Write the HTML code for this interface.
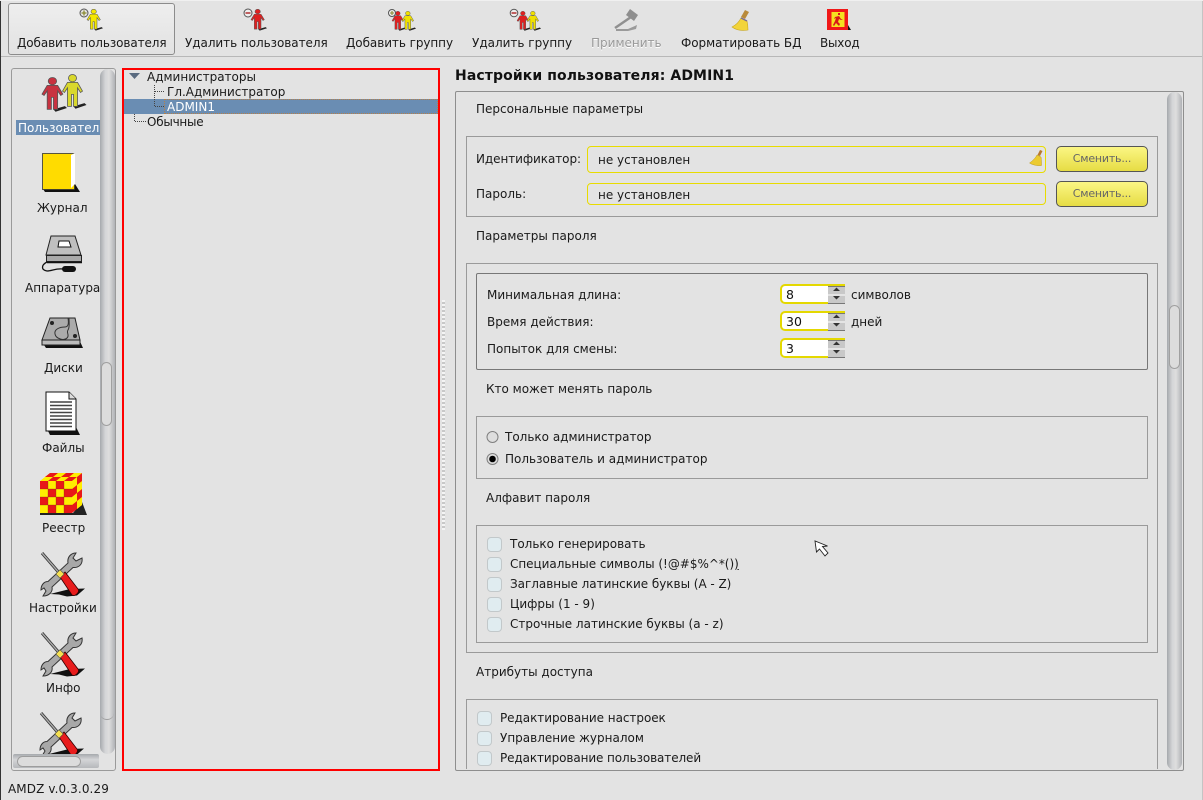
<!DOCTYPE html>
<html><head><meta charset="utf-8">
<style>
html,body{margin:0;padding:0;width:1203px;height:800px;overflow:hidden;background:#e3e3e3}
body{position:relative;font-family:"DejaVu Sans",sans-serif;font-size:12px;color:#1a1a1a}
.t{position:absolute;white-space:nowrap;line-height:14px;height:14px}
.b{position:absolute;box-sizing:border-box;border:1px solid #9a9a9a}
.f{position:absolute;box-sizing:border-box;border:1px solid #e8dc00;border-radius:4px}
.btn{position:absolute;box-sizing:border-box;width:92px;border:1px solid #555;border-radius:5px;background:linear-gradient(#fbf684,#e6dc44);color:#666;font-size:11px;text-align:center;letter-spacing:-.2px}
.cb{position:absolute;box-sizing:border-box;width:15px;height:15px;border:1px solid #c2c8ca;border-radius:4px;background:#e0ecf0}
.sb{position:absolute;background:linear-gradient(90deg,#a6a9ad,#d4d5d7 35%,#dedede 60%,#b0b2b6)}
.sp{position:absolute;left:780px;width:65px;height:20px;box-sizing:border-box;border:2px solid #e4d800;border-right:0;border-radius:5px 0 0 5px;background:#fff;line-height:17px;padding-left:4px;color:#111;font-size:12.5px}
.ar{position:absolute;left:828px;width:17px;height:16px;background:#c8c8c8;border-top:1px solid #777;border-bottom:1px solid #777}
svg{position:absolute;left:0;top:0}
</style></head><body>

<div style="position:absolute;left:0;top:0;width:1px;height:800px;background:#333"></div>
<div style="position:absolute;left:1202px;top:0;width:1px;height:800px;background:#c4c4c4"></div>
<div style="position:absolute;left:0;top:0;width:1203px;height:1px;background:#f0f0f0"></div>
<div style="position:absolute;left:1px;top:56px;width:1201px;height:1px;background:#b8b8b8"></div>

<div style="position:absolute;left:8px;top:3px;width:167px;height:52px;box-sizing:border-box;border:1px solid #8c8c8c;border-radius:3px;background:linear-gradient(#eeeeee,#e2e2e2)"></div>
<div class="t" style="left:17px;top:36px;letter-spacing:-.1px">Добавить пользователя</div>
<div class="t" style="left:185px;top:36px;letter-spacing:-.05px">Удалить пользователя</div>
<div class="t" style="left:346px;top:36px;letter-spacing:-.07px">Добавить группу</div>
<div class="t" style="left:472px;top:36px">Удалить группу</div>
<div class="t" style="left:591px;top:36px;color:#9a9a9a;text-shadow:0 1px 0 #fff">Применить</div>
<div class="t" style="left:681px;top:36px;letter-spacing:-.06px">Форматировать БД</div>
<div class="t" style="left:820px;top:36px;letter-spacing:-.2px">Выход</div>

<!-- sidebar -->
<div class="b" style="left:11px;top:68px;width:105px;height:703px;border-radius:3px"></div>
<div class="sb" style="left:100px;top:69px;width:15px;height:685px;border-radius:8px"></div>
<div class="b" style="left:101px;top:362px;width:11px;height:64px;border-radius:6px;background:#dcdcdc;border-color:#a0a0a0"></div>
<div style="position:absolute;left:100px;top:700px;width:14px;height:20px;box-sizing:border-box;border-radius:0 0 7px 7px;border-bottom:1px solid #a0a0a0"></div>
<div style="position:absolute;left:16px;top:120px;width:84px;height:15px;background:#6a8db3"></div>
<div class="t" style="left:18px;top:121px;color:#fff;width:82px;overflow:hidden">Пользователи</div>
<div class="t" style="left:37px;top:201px">Журнал</div>
<div class="t" style="left:25px;top:281px;width:75px;overflow:hidden">Аппаратура</div>
<div class="t" style="left:44px;top:361px">Диски</div>
<div class="t" style="left:42px;top:441px">Файлы</div>
<div class="t" style="left:42px;top:521px">Реестр</div>
<div class="t" style="left:29px;top:601px">Настройки</div>
<div class="t" style="left:46px;top:681px">Инфо</div>

<!-- tree -->
<div style="position:absolute;left:122px;top:68px;width:318px;height:703px;box-sizing:border-box;border:2px solid #f00"></div>
<div style="position:absolute;left:124px;top:99px;width:314px;height:15px;background:#6a8db3"></div>
<div style="position:absolute;left:164px;top:99px;width:274px;height:15px;box-sizing:border-box;border:1px dotted #b5804a"></div>
<div class="t" style="left:147px;top:70px">Администраторы</div>
<div class="t" style="left:167px;top:85px">Гл.Администратор</div>
<div class="t" style="left:167px;top:100px;color:#fff">ADMIN1</div>
<div class="t" style="left:147px;top:115px;letter-spacing:-.25px">Обычные</div>

<div style="position:absolute;left:442px;top:300px;width:3px;height:230px;background:repeating-linear-gradient(#f4f4f4 0 2px,#c8c8c8 2px 4px)"></div>

<!-- right -->
<div class="t" style="left:455px;top:69px;font-weight:bold;font-size:14px;letter-spacing:.1px;color:#111">Настройки пользователя: ADMIN1</div>
<div class="b" style="left:455px;top:91px;width:729px;height:680px;border-radius:2px;border-color:#8e8e8e"></div>
<div class="sb" style="left:1167px;top:92px;width:15px;height:678px;border-radius:8px"></div>
<div class="b" style="left:1169px;top:305px;width:11px;height:64px;border-radius:6px;background:#dcdcdc;border-color:#a0a0a0"></div>

<div class="t" style="left:476px;top:102px">Персональные параметры</div>
<div class="b" style="left:466px;top:136px;width:692px;height:81px"></div>
<div class="t" style="left:476px;top:152px;letter-spacing:-.07px">Идентификатор:</div>
<div class="f" style="left:587px;top:146px;width:459px;height:27px"></div>
<div class="t" style="left:598px;top:153px">не установлен</div>
<div class="btn" style="left:1056px;top:146px;height:26px;line-height:23px">Сменить...</div>
<div class="t" style="left:476px;top:187px">Пароль:</div>
<div class="f" style="left:587px;top:183px;width:459px;height:22px"></div>
<div class="t" style="left:598px;top:188px">не установлен</div>
<div class="btn" style="left:1056px;top:181px;height:26px;line-height:23px">Сменить...</div>

<div class="t" style="left:476px;top:229px">Параметры пароля</div>
<div class="b" style="left:466px;top:263px;width:692px;height:390px"></div>
<div class="b" style="left:476px;top:273px;width:672px;height:97px;border-color:#777;border-radius:2px"></div>
<div class="t" style="left:487px;top:288px">Минимальная длина:</div>
<div class="t" style="left:487px;top:315px">Время действия:</div>
<div class="t" style="left:487px;top:342px">Попыток для смены:</div>
<div class="sp" style="top:284px">8</div><div class="sp" style="top:311px">30</div><div class="sp" style="top:338px">3</div>
<div class="ar" style="top:286px"></div><div class="ar" style="top:313px"></div><div class="ar" style="top:340px"></div>
<div class="t" style="left:851px;top:288px">символов</div>
<div class="t" style="left:851px;top:315px">дней</div>

<div class="t" style="left:486px;top:382px">Кто может менять пароль</div>
<div class="b" style="left:476px;top:416px;width:672px;height:63px"></div>
<div class="t" style="left:505px;top:430px">Только администратор</div>
<div class="t" style="left:505px;top:452px">Пользователь и администратор</div>

<div class="t" style="left:486px;top:491px">Алфавит пароля</div>
<div class="b" style="left:476px;top:525px;width:672px;height:118px"></div>
<div class="cb" style="left:487px;top:537px"></div><div class="t" style="left:510px;top:537px">Только генерировать</div>
<div class="cb" style="left:487px;top:557px"></div><div class="t" style="left:510px;top:557px;letter-spacing:-.03px">Специальные символы (!@#$%^*()<u>)</u></div>
<div class="cb" style="left:487px;top:577px"></div><div class="t" style="left:510px;top:577px;letter-spacing:-.03px">Заглавные латинские буквы (A - Z)</div>
<div class="cb" style="left:487px;top:597px"></div><div class="t" style="left:510px;top:597px">Цифры (1 - 9)</div>
<div class="cb" style="left:487px;top:617px"></div><div class="t" style="left:510px;top:617px">Строчные латинские буквы (a - z)</div>

<div class="t" style="left:476px;top:665px">Атрибуты доступа</div>
<div style="position:absolute;left:466px;top:699px;width:692px;height:70px;box-sizing:border-box;border:1px solid #9a9a9a;border-bottom:0"></div>
<div class="cb" style="left:477px;top:711px"></div><div class="t" style="left:500px;top:711px;letter-spacing:-.05px">Редактирование настроек</div>
<div class="cb" style="left:477px;top:731px"></div><div class="t" style="left:500px;top:731px">Управление журналом</div>
<div style="position:absolute;left:477px;top:751px;width:15px;height:15px;overflow:hidden"><div class="cb" style="left:0;top:0"></div></div>
<div class="t" style="left:500px;top:751px;letter-spacing:-.1px">Редактирование пользователей</div>

<div class="t" style="left:8px;top:782px;letter-spacing:.1px">AMDZ v.0.3.0.29</div>

<svg width="1203" height="800" viewBox="0 0 1203 800" xmlns="http://www.w3.org/2000/svg">
<defs>
<symbol id="p" viewBox="0 0 24 40" overflow="visible" preserveAspectRatio="none">
<path d="M11 35l11-3.500 2 2-11 4z" fill="#222"/>
<circle cx="10" cy="4.500" r="4" fill="currentColor" stroke="#555" stroke-width=".8"/>
<path d="M5 9h10l5 9.500-2 1.500-3-5V35h-4V22H9v13H5V15l-3 5-2-1.500z" fill="currentColor" stroke="#555" stroke-width=".8"/>
</symbol>
<symbol id="tool" viewBox="0 0 46 44" overflow="visible">
<path d="M10 42l20-5 15-.5-8 7-10 1-8-2z" fill="#111"/>
<path d="M2 1 21 23" stroke="#333" stroke-width="3"/><path d="M2 1 21 23" stroke="#aaa" stroke-width="1.400"/>
<path d="M36 1l-3 5 3 3 6-3c1 6-3 10-9 9.500L12 35c1 5-3 9-9 9l3-5-2-3-3 2c0-5 3-8.500 7-8.500L28 11c-1-6 3-10 8-10z" fill="#a8a8a8" stroke="#333" stroke-width="1"/>
<path d="M20 25l5-5 13 17c2 3-3 8-6 6z" fill="#e81c1c" stroke="#300" stroke-width=".8"/>
<rect x="17" y="19" width="6" height="6" transform="rotate(45 20 22)" fill="#f5e050" stroke="#444" stroke-width=".6"/>
</symbol>
<clipPath id="sc"><rect x="13" y="700" width="87" height="54"/></clipPath>
</defs>

<!-- toolbar icons -->
<use href="#p" x="87" y="9" width="16" height="23" color="#f5e800"/>
<circle cx="84" cy="13" r="4" fill="#e3e3e3" stroke="#555"/><path d="M81.500 13h5M84 10.500v5" stroke="#8a8a30" stroke-width="1.300"/>

<use href="#p" x="251" y="9" width="16" height="23" color="#e02020"/>
<circle cx="248" cy="13" r="4" fill="#eee" stroke="#555"/><path d="M245.500 13h5" stroke="#b03030" stroke-width="1.500"/>

<use href="#p" x="392" y="11" width="14" height="21" color="#e02020"/>
<use href="#p" x="402" y="11" width="14" height="21" color="#f0e000"/>
<circle cx="392" cy="13" r="3.500" fill="#eee" stroke="#555"/><path d="M390 13h4M392 11v4" stroke="#8a8a30" stroke-width="1.100"/>

<use href="#p" x="517" y="11" width="14" height="21" color="#e02020"/>
<use href="#p" x="527" y="11" width="14" height="21" color="#f0e000"/>
<circle cx="514" cy="13" r="3.800" fill="#eee" stroke="#555"/><path d="M511.500 13h5" stroke="#b03030" stroke-width="1.500"/>

<!-- gavel -->
<path d="M615 28l16-11" stroke="#909090" stroke-width="2.500"/>
<path d="M616 29h12l9-4-1 4-8 2h-12z" fill="#9a9a9a"/>
<path d="M630 9l8 6-4 6-8-6z" fill="#8e8e8e"/>

<!-- broom -->
<path d="M745 10l4 2-4 7-4-2z" fill="#b98a3a"/>
<path d="M741 18l6 3c1 4 1 7 1 9-6 1-12 0-16-3 4-2 7-5 9-9z" fill="#f2d43a" stroke="#c9a820" stroke-width=".6"/>
<path d="M741 18l6 3" stroke="#7a6a90" stroke-width="1.300"/>

<!-- exit -->
<path d="M827 30h24l-3-5v5z" fill="#111"/>
<rect x="827" y="9" width="21" height="21" fill="#f01818"/>
<rect x="831.500" y="12" width="13" height="15" fill="#f5e020"/>
<path d="M838 13l2 0 0 2-2 0zM835 17l4-1 2 3 2 0-2 1-2-1-1 3 2 2-1 2-3-3-2 3-1-1 2-4 1-3-2 1z" fill="#d81818"/>

<!-- tree glyphs -->
<path d="M129 73h11l-5.500 6z" fill="#5a6b80"/>
<path d="M154.500 85v21.500H165M155 91.500h10M134.500 114v7.500H146" fill="none" stroke="#444" stroke-dasharray="1 1"/>

<!-- sidebar icons -->
<use href="#p" x="42" y="77" width="25" height="37" color="#c83240"/>
<use href="#p" x="62.500" y="74" width="24" height="37" color="#d9d82c"/>

<!-- journal -->
<path d="M43 189h30l2-5 5 8H45z" fill="#111"/>
<rect x="42.500" y="153.500" width="32" height="36" fill="#ffdc00" stroke="#333" stroke-width=".8"/>
<path d="M71 155l4-2v31l-4 4z" fill="#fff"/>

<!-- scanner -->
<path d="M46 255l5-19h24l6 19z" fill="#bfbfbf" stroke="#222"/>
<rect x="46.500" y="255.500" width="35" height="6" fill="#a9a9a9" stroke="#222"/>
<path d="M47 262.500h35" stroke="#111" stroke-width="1.500"/>
<path d="M59 241h10l2 6H58z" fill="#fff" stroke="#111"/>
<path d="M47 262c-6 3-6 8 0 9 5 0 9-3 16-2" fill="none" stroke="#111" stroke-width="1.300"/>
<rect x="62" y="266" width="14" height="6" rx="3" fill="#111"/>

<!-- disk -->
<path d="M44 345h36l-2-8 5 11H46z" fill="#111"/>
<path d="M42 340l8-22h25l5 22z" fill="#ababab" stroke="#222"/>
<rect x="42" y="340" width="38" height="5" fill="#bcbcbc" stroke="#222"/>
<circle cx="52" cy="323" r="2" fill="#222"/><circle cx="75" cy="336" r="2" fill="#222"/>
<path d="M68 318c1 6 0 9-3 9-5 0-11 2-10 7 1 5 9 7 12 4 3-3-1-5 1-8 2-3 1-8 1-12" fill="#ababab" stroke="#333"/>

<!-- file -->
<path d="M48 431h28v-4l4 8H50z" fill="#111"/>
<path d="M46 392h23l7 7v32H46z" fill="#fff" stroke="#111"/>
<path d="M69 392v7h7" fill="#ddd" stroke="#111"/>
<path d="M50 402h22M50 405.500h22M50 409h22M50 412.500h22M50 416h22M50 419.500h22M50 423h22M50 426.500h22" stroke="#444" stroke-width="1.400"/>

<!-- cube -->
<path d="M40 513h33l9-11 5 13H40z" fill="#222"/>
<rect x="40" y="481" width="32" height="32" fill="#e81818"/>
<path d="M48 481h8v8h-8zM64 481h8v8h-8zM40 489h8v8h-8zM56 489h8v8h-8zM48 497h8v8h-8zM64 497h8v8h-8zM40 505h8v8h-8zM56 505h8v8h-8z" fill="#ffee00"/>
<path d="M40 481l10-8h32l-10 8z" fill="#ffee00"/>
<path d="M48 481h8l5-4h-8zM64 481h8l5-4h-8zM45 477h8l5-4h-8zM61 477h8l5-4h-8z" fill="#e81818"/>
<path d="M72 481l10-8v32l-10 8z" fill="#e81818"/>
<path d="M72 481l5-4v8l-5 4zM72 497l5-4v8l-5 4zM77 485l5-4v8l-5 4zM77 501l5-4v8l-5 4z" fill="#ffee00"/>
<path d="M40 489h32M40 497h32M40 505h32M48 481v32M56 481v32M64 481v32" stroke="#7a3a10" stroke-width=".3"/>

<use href="#tool" x="40" y="552" width="46" height="44"/>
<use href="#tool" x="40" y="632" width="46" height="44"/>
<g clip-path="url(#sc)"><use href="#tool" x="39" y="712" width="46" height="44"/></g>

<!-- horizontal scroll -->
<defs><linearGradient id="hs" x1="0" y1="0" x2="0" y2="1"><stop offset="0" stop-color="#a6a9ad"/><stop offset=".4" stop-color="#d4d5d7"/><stop offset="1" stop-color="#b6b8bb"/></linearGradient></defs>
<rect x="13" y="754" width="86" height="14" rx="2" fill="url(#hs)"/>
<rect x="17.500" y="756.500" width="63" height="10" rx="5" fill="#dcdcdc" stroke="#9d9d9d"/>

<!-- small broom in field -->
<path d="M1040 150l2.500 1-2.500 5-2.500-1z" fill="#b8792c"/>
<path d="M1037 155l4 2c.5 3 .5 6 .5 8.500-4 .5-9-.5-12-2.500 3-2 6-5 7.500-8z" fill="#eccb30" stroke="#bb9a20" stroke-width=".5"/>

<!-- spin arrows -->
<g fill="#333" stroke="none">
<path d="M833 291h7l-3.500-3.500zM833 296h7l-3.500 3.500z"/>
<path d="M833 318h7l-3.500-3.500zM833 323h7l-3.500 3.500z"/>
<path d="M833 345h7l-3.500-3.500zM833 350h7l-3.500 3.500z"/>
</g>
<path d="M828 295h17M828 322h17M828 349h17" stroke="#fff"/>

<!-- radios -->
<circle cx="492.500" cy="437" r="5.500" fill="#dedede" stroke="#808080"/>
<circle cx="492.500" cy="459" r="5.500" fill="#dedede" stroke="#808080"/>
<circle cx="492.500" cy="459" r="3.300" fill="#000"/>

<!-- cursor -->
<path d="M815 541l1.500 11 3-3 5.500 7 3-3-5.500-6.500 5-.5z" fill="#fff" stroke="#222" stroke-width=".9"/>
</svg>
</body></html>
